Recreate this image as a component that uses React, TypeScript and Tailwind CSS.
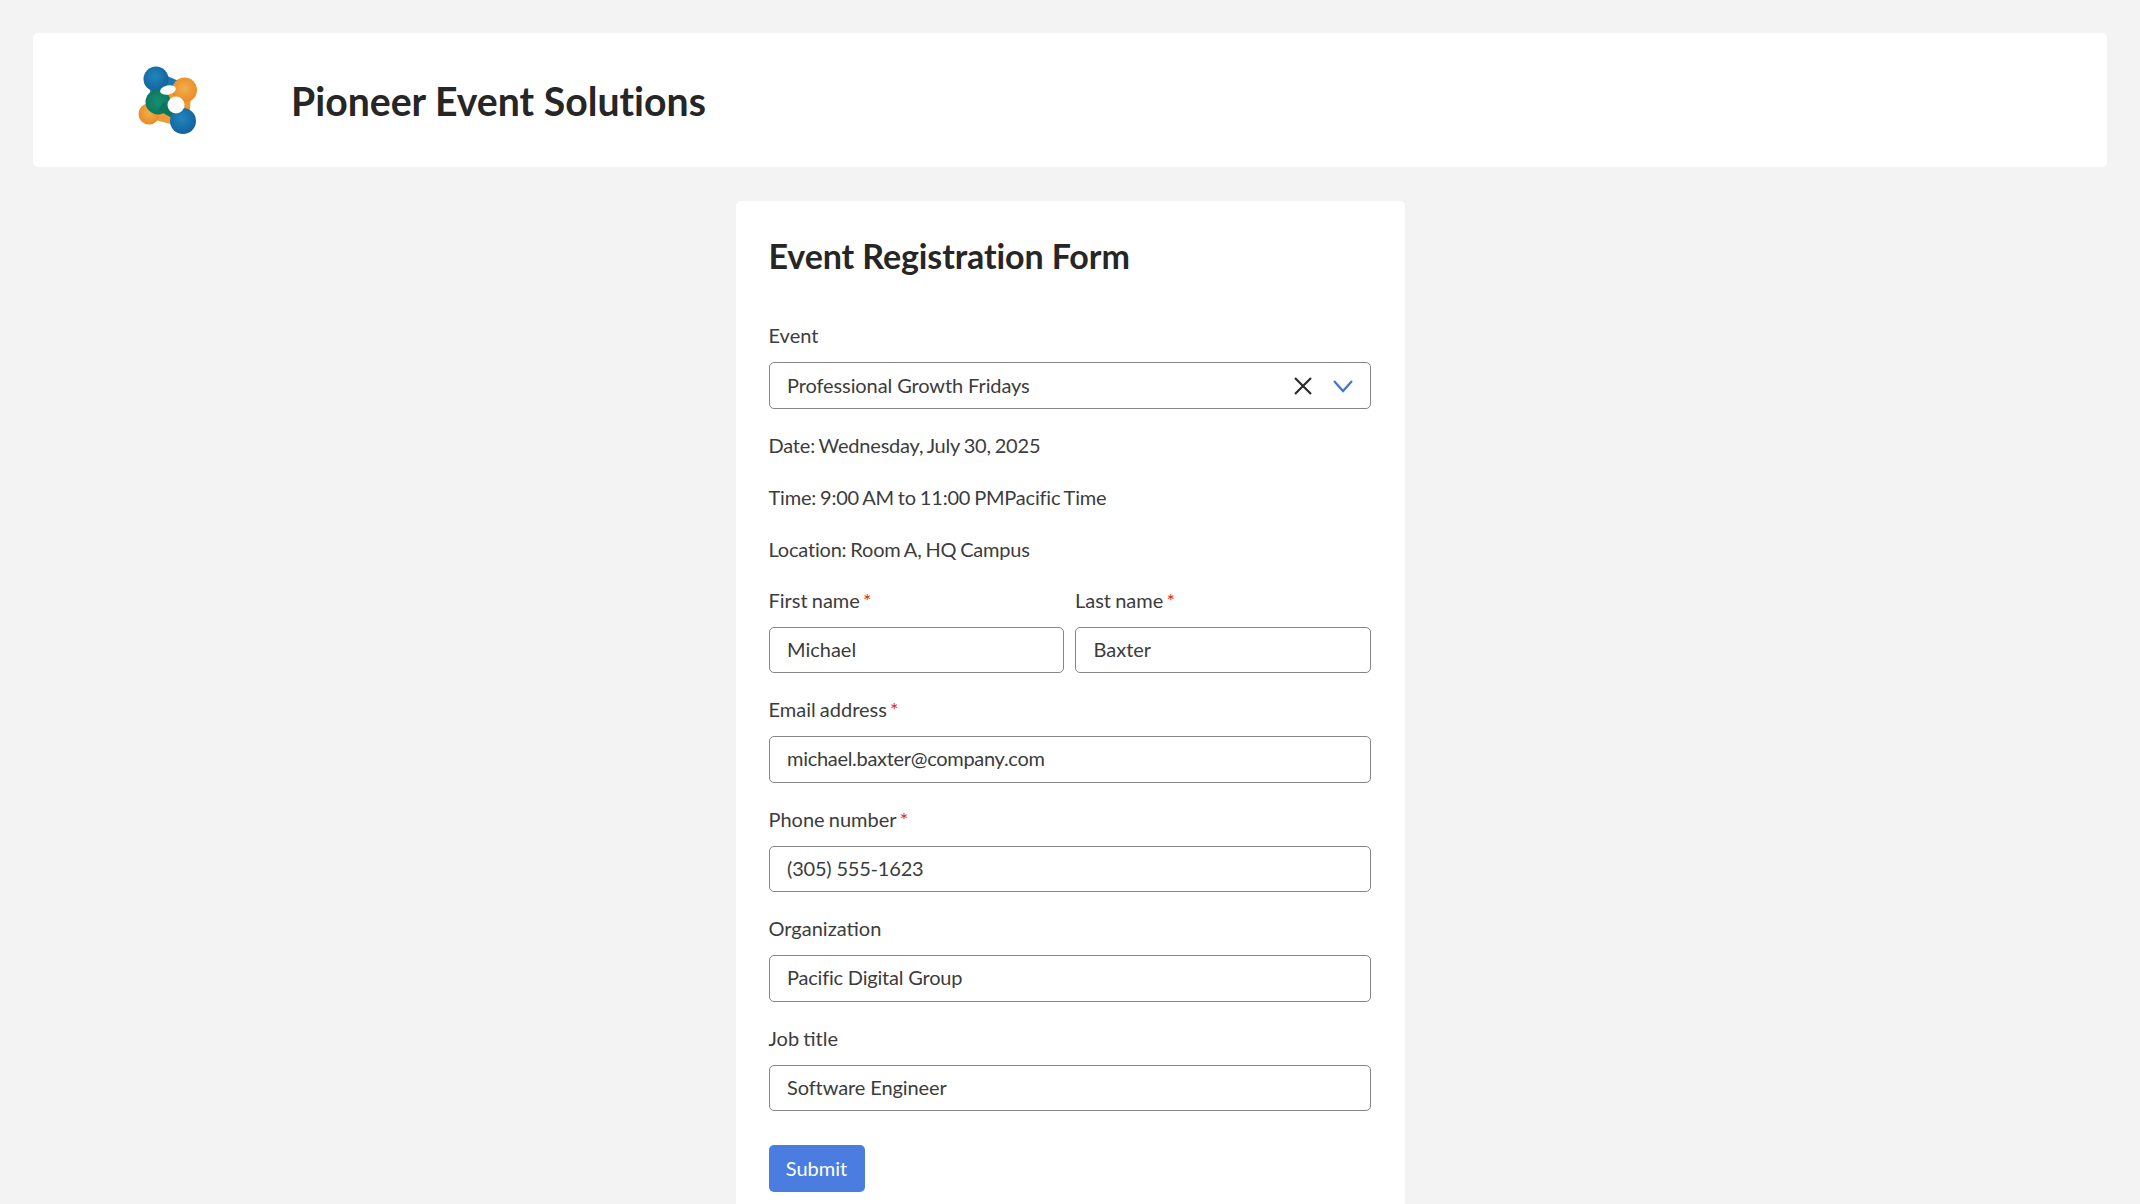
import React from "react";

function Logo() {
  return (
    <svg width="70" height="72" viewBox="0 0 70 72" className="blur-[0.7px]">
      <defs>
        <radialGradient id="b" cx="45%" cy="40%" r="60%"><stop offset="0%" stopColor="#1f86bd" /><stop offset="100%" stopColor="#14629c" /></radialGradient>
        <radialGradient id="o" cx="50%" cy="45%" r="55%"><stop offset="0%" stopColor="#efb04f" /><stop offset="100%" stopColor="#ec8a24" /></radialGradient>
        <radialGradient id="g" cx="50%" cy="50%" r="55%"><stop offset="0%" stopColor="#16906e" /><stop offset="100%" stopColor="#0c7560" /></radialGradient>
      </defs>
      <path d="M19 15 L38 23" stroke="#1a78b0" strokeWidth="14" />
      <path d="M19 15 L21 34" stroke="#1a78b0" strokeWidth="14" />
      <path d="M48 26 L30 34" stroke="#ee9a36" strokeWidth="13" />
      <path d="M48 26 L46 50" stroke="#ee9a36" strokeWidth="13" />
      <path d="M46 57 L44 46" stroke="#14709f" strokeWidth="14" />
      <path d="M20 38 L42 55" stroke="#14709f" strokeWidth="15" />
      <path d="M14 50 L38 56" stroke="#ee9a36" strokeWidth="10" />
      <circle cx="19" cy="15" r="12.5" fill="url(#b)" />
      <circle cx="47.5" cy="26" r="12.5" fill="url(#o)" />
      <circle cx="46" cy="57" r="13" fill="url(#b)" />
      <circle cx="12" cy="50" r="10.5" fill="url(#o)" />
      <circle cx="21" cy="38" r="12.5" fill="url(#g)" />
      <path d="M24 42 L36 49" stroke="#0c7560" strokeWidth="10" />
      <ellipse cx="31" cy="26" rx="8" ry="4.5" fill="#fff" transform="rotate(-12 31 26)" />
      <circle cx="39" cy="41" r="8.5" fill="#fff" />
    </svg>
  );
}

function Label({ text, req }: { text: string; req?: boolean }) {
  return (
    <div className="h-[26px] leading-[26px] mb-[14px] text-[20px] text-[#3c3c3c] [word-spacing:-1px]">
      {text}
      {req && <span className="text-[#d92d20] [word-spacing:-2px]"> *</span>}
    </div>
  );
}

function Input({ value, cls }: { value: string; cls?: string }) {
  return (
    <input
      readOnly
      value={value}
      className={"block w-full h-[46.5px] pl-[17.5px] pr-[17px] pb-[2px] text-[20px] text-[#3c3c3c] bg-white border border-[#868686] rounded-[5px] outline-none " + (cls ?? "")}
    />
  );
}

function Field({ text, value, req, cls }: { text: string; value: string; req?: boolean; cls?: string }) {
  return (
    <div className="mt-[23px]">
      <Label text={text} req={req} />
      <Input value={value} cls={cls} />
    </div>
  );
}

export default function App() {
  return (
    <div className="h-screen overflow-hidden bg-[#f3f3f3] px-[33px] pt-[33px] font-['Lato',sans-serif]">
      <header className="h-[134px] bg-white rounded-[5px] flex items-center pl-[104px]">
        <Logo />
        <h1 className="ml-[84px] pt-[2px] text-[39.2px] font-bold text-[#262626] [font-variant-ligatures:none]">Pioneer Event Solutions</h1>
      </header>
      <main className="w-[669px] mx-auto mt-[34px] bg-white rounded-[5px] pl-[33px] pr-[34px] pt-[30px] pb-[40px]">
        <h2 className="h-[50px] leading-[50px] text-[34px] font-bold text-[#262626] tracking-[-0.1px] [font-variant-ligatures:none]">Event Registration Form</h2>
        <div className="mt-[41px]">
          <Label text="Event" />
          <div className="h-[47px] flex items-center pl-[17.5px] pr-[16px] pb-[2px] text-[20px] text-[#3c3c3c] border border-[#868686] rounded-[5px]">
            <span className="flex-1 tracking-[-0.1px]">Professional Growth Fridays</span>
            <svg width="20" height="20" viewBox="0 0 20 20" fill="none" stroke="#2b2b2b" strokeWidth="2.2" className="mt-[2px]">
              <path d="M2 2 L18 18 M18 2 L2 18" />
            </svg>
            <svg width="22" height="14" viewBox="0 0 22 14" fill="none" stroke="#3f74d8" strokeWidth="2.2" className="ml-[19px] mt-[2px]">
              <path d="M2 2 L11 12 L20 2" />
            </svg>
          </div>
        </div>
        <div className="text-[20px] text-[#3c3c3c] leading-[26px] [word-spacing:-1px]">
          <p className="mt-[22.5px] tracking-[-0.2px]">Date: Wednesday, July 30, 2025</p>
          <p className="mt-[26px] tracking-[-0.2px]">Time: 9:00 AM to 11:00 PMPacific Time</p>
          <p className="mt-[26px] tracking-[-0.2px]">Location: Room A, HQ Campus</p>
        </div>
        <div className="grid grid-cols-2 gap-x-[11px] mt-[2px]">
          <Field text="First name" value="Michael" req />
          <Field text="Last name" value="Baxter" req />
        </div>
        <div className="mt-[1px]">
          <Field text="Email address" value="michael.baxter@company.com" req cls="tracking-[-0.3px]" />
        </div>
        <Field text="Phone number" value="(305) 555-1623" req cls="tracking-[-0.2px]" />
        <Field text="Organization" value="Pacific Digital Group" cls="tracking-[-0.2px]" />
        <Field text="Job title" value="Software Engineer" cls="tracking-[-0.1px]" />
        <button className="mt-[34px] w-[96px] h-[47px] pb-[2px] bg-[#4a7ddf] text-white text-[20px] rounded-[5px]">Submit</button>
      </main>
    </div>
  );
}
